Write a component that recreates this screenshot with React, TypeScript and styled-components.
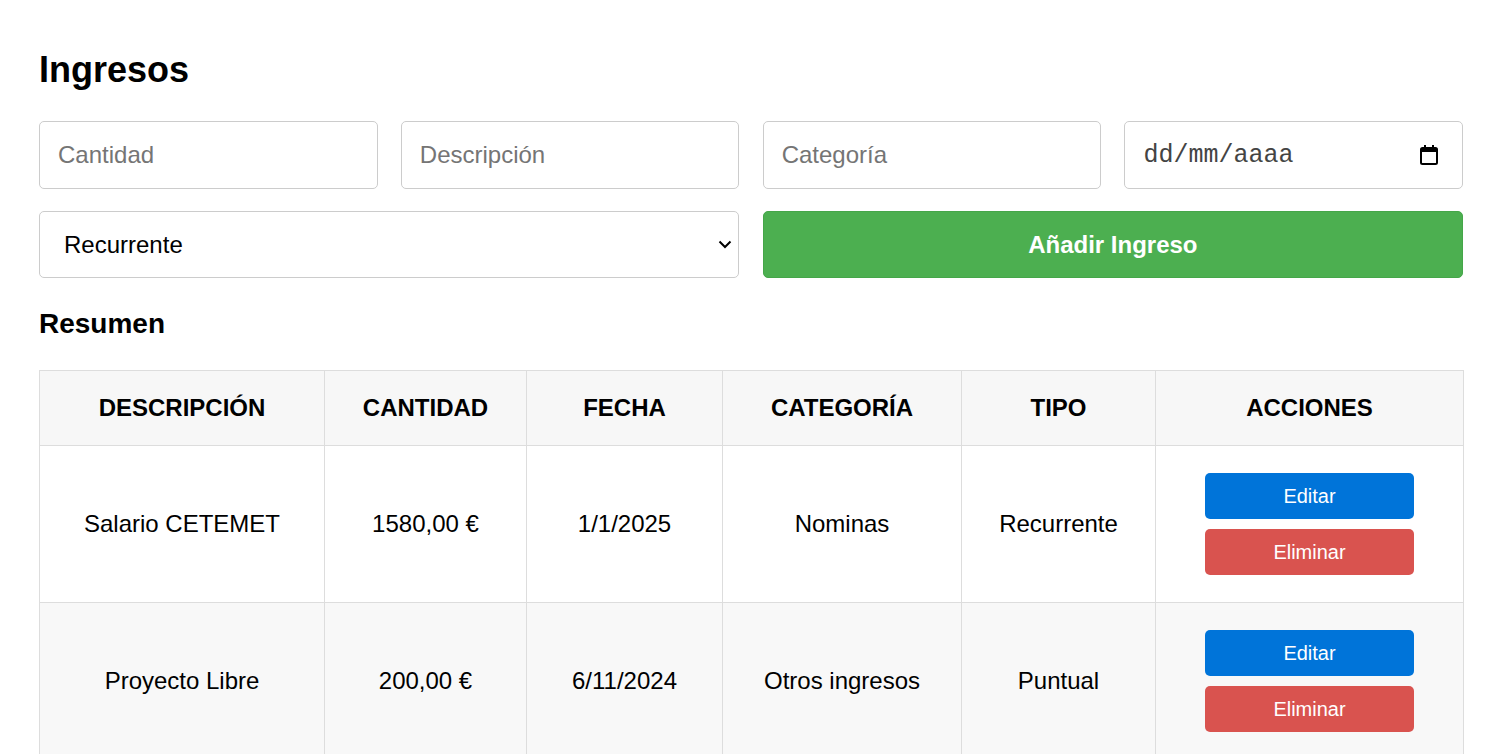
import React from "react";
import styled, { createGlobalStyle } from "styled-components";

const Global = createGlobalStyle`
  html, body { margin: 0; padding: 0; background: #fff; }
  body { font-family: "Liberation Sans", Arial, sans-serif; color: #000; }
  * { box-sizing: border-box; }
`;

const Page = styled.div`
  width: 1424px;
  margin-left: 39px;
  padding-top: 49px;
`;

const Title = styled.h1`
  margin: 0 0 31px;
  font-size: 36px;
  font-weight: 700;
  line-height: 41px;
`;

const FormGrid = styled.div`
  display: grid;
  grid-template-columns: repeat(4, minmax(0, 1fr));
  column-gap: 23.3px;
  row-gap: 22px;
`;

const fieldBase = `
  height: 67px;
  border: 1px solid #ccc;
  border-radius: 5px;
  background: #fff;
  font-family: "Liberation Sans", Arial, sans-serif;
  font-size: 24px;
  color: #000;
`;

const TextInput = styled.input`
  ${fieldBase}
  height: 68px;
  width: 100%;
  min-width: 0;
  padding: 0 18px;
  outline: none;
  &::placeholder { color: #757575; }
`;

const DateField = styled.label`
  ${fieldBase}
  height: 68px;
  min-width: 0;
  display: flex;
  align-items: center;
  padding: 0 24px 0 18px;
`;

const DateText = styled.input`
  flex: 1;
  width: 0;
  min-width: 0;
  border: none;
  outline: none;
  padding: 0;
  background: transparent;
  font-family: "Courier New", "Liberation Mono", monospace;
  font-size: 25px;
  font-weight: 400;
  &::placeholder { color: #444; }
`;

const SelectField = styled.label<{ $span: number }>`
  ${fieldBase}
  grid-column: span ${(p) => p.$span};
  min-width: 0;
  display: flex;
  align-items: center;
  padding: 0 6px 0 24px;
`;

const Select = styled.select`
  flex: 1;
  width: 0;
  min-width: 0;
  appearance: none;
  border: none;
  outline: none;
  background: transparent;
  font-family: "Liberation Sans", Arial, sans-serif;
  font-size: 24px;
  color: #000;
  padding: 0;
`;

const AddButton = styled.button<{ $span: number }>`
  grid-column: span ${(p) => p.$span};
  height: 67px;
  border: 1px solid #45a649;
  border-radius: 5px;
  background: #4caf50;
  color: #fff;
  font-family: "Liberation Sans", Arial, sans-serif;
  font-size: 24px;
  font-weight: 700;
  cursor: pointer;
`;

const Subtitle = styled.h2`
  margin: 30px 0 30px;
  font-size: 28px;
  font-weight: 700;
  line-height: 32px;
`;

const Table = styled.table`
  width: 1424px;
  border-collapse: collapse;
  table-layout: fixed;
  border: 1px solid #ddd;
`;

const Th = styled.th`
  padding: 23px 10px;
  height: 74px;
  background: #f7f7f7;
  border: 1px solid #ddd;
  font-size: 24px;
  font-weight: 700;
  line-height: 28px;
  text-transform: uppercase;
  text-align: center;
`;

const Tr = styled.tr<{ $striped: boolean }>`
  background: ${(p) => (p.$striped ? "#f8f8f8" : "#fff")};
`;

const Td = styled.td`
  height: 157px;
  padding: 22px 10px;
  border: 1px solid #ddd;
  font-size: 24px;
  line-height: 28px;
  text-align: center;
  vertical-align: middle;
`;

const Actions = styled.div`
  display: flex;
  flex-direction: column;
  align-items: center;
  gap: 10px;
`;

const ActionButton = styled.button<{ $variant: "edit" | "delete" }>`
  width: 209px;
  height: 46px;
  border: none;
  border-radius: 5px;
  background: ${(p) => (p.$variant === "edit" ? "#0074d9" : "#d9534f")};
  color: #fff;
  font-family: "Liberation Sans", Arial, sans-serif;
  font-size: 20px;
  cursor: pointer;
`;

const CalendarIcon = () => (
  <svg width="18" height="20" viewBox="0 0 18 20" fill="none">
    <rect x="1" y="3" width="16" height="16" rx="1.5" stroke="#000" strokeWidth="2" />
    <rect x="1" y="3" width="16" height="4" fill="#000" />
    <rect x="4" y="0" width="2" height="4" fill="#000" />
    <rect x="12" y="0" width="2" height="4" fill="#000" />
  </svg>
);

const Chevron = () => (
  <svg width="14" height="9" viewBox="0 0 14 9" fill="none">
    <polyline points="1.5,1.5 7,7 12.5,1.5" stroke="#000" strokeWidth="2" />
  </svg>
);

const cols = [285, 202, 196, 239, 194, 308];
const headers = ["Descripción", "Cantidad", "Fecha", "Categoría", "Tipo", "Acciones"];

const rows = [
  { desc: "Salario CETEMET", amount: "1580,00 €", date: "1/1/2025", cat: "Nominas", type: "Recurrente" },
  { desc: "Proyecto Libre", amount: "200,00 €", date: "6/11/2024", cat: "Otros ingresos", type: "Puntual" },
];

export default function App() {
  return (
    <>
      <Global />
      <Page>
        <Title>Ingresos</Title>
        <FormGrid>
          <TextInput placeholder="Cantidad" />
          <TextInput placeholder="Descripción" />
          <TextInput placeholder="Categoría" />
          <DateField>
            <DateText placeholder="dd/mm/aaaa" />
            <CalendarIcon />
          </DateField>
          <SelectField $span={2}>
            <Select defaultValue="Recurrente">
              <option>Recurrente</option>
              <option>Puntual</option>
            </Select>
            <Chevron />
          </SelectField>
          <AddButton $span={2}>Añadir Ingreso</AddButton>
        </FormGrid>
        <Subtitle>Resumen</Subtitle>
        <Table>
          <colgroup>
            {cols.map((w, i) => (
              <col key={i} style={{ width: w }} />
            ))}
          </colgroup>
          <thead>
            <tr>
              {headers.map((h) => (
                <Th key={h}>{h}</Th>
              ))}
            </tr>
          </thead>
          <tbody>
            {rows.map((r, i) => (
              <Tr key={r.desc} $striped={i % 2 === 1}>
                <Td>{r.desc}</Td>
                <Td>{r.amount}</Td>
                <Td>{r.date}</Td>
                <Td>{r.cat}</Td>
                <Td>{r.type}</Td>
                <Td>
                  <Actions>
                    <ActionButton $variant="edit">Editar</ActionButton>
                    <ActionButton $variant="delete">Eliminar</ActionButton>
                  </Actions>
                </Td>
              </Tr>
            ))}
          </tbody>
        </Table>
      </Page>
    </>
  );
}
